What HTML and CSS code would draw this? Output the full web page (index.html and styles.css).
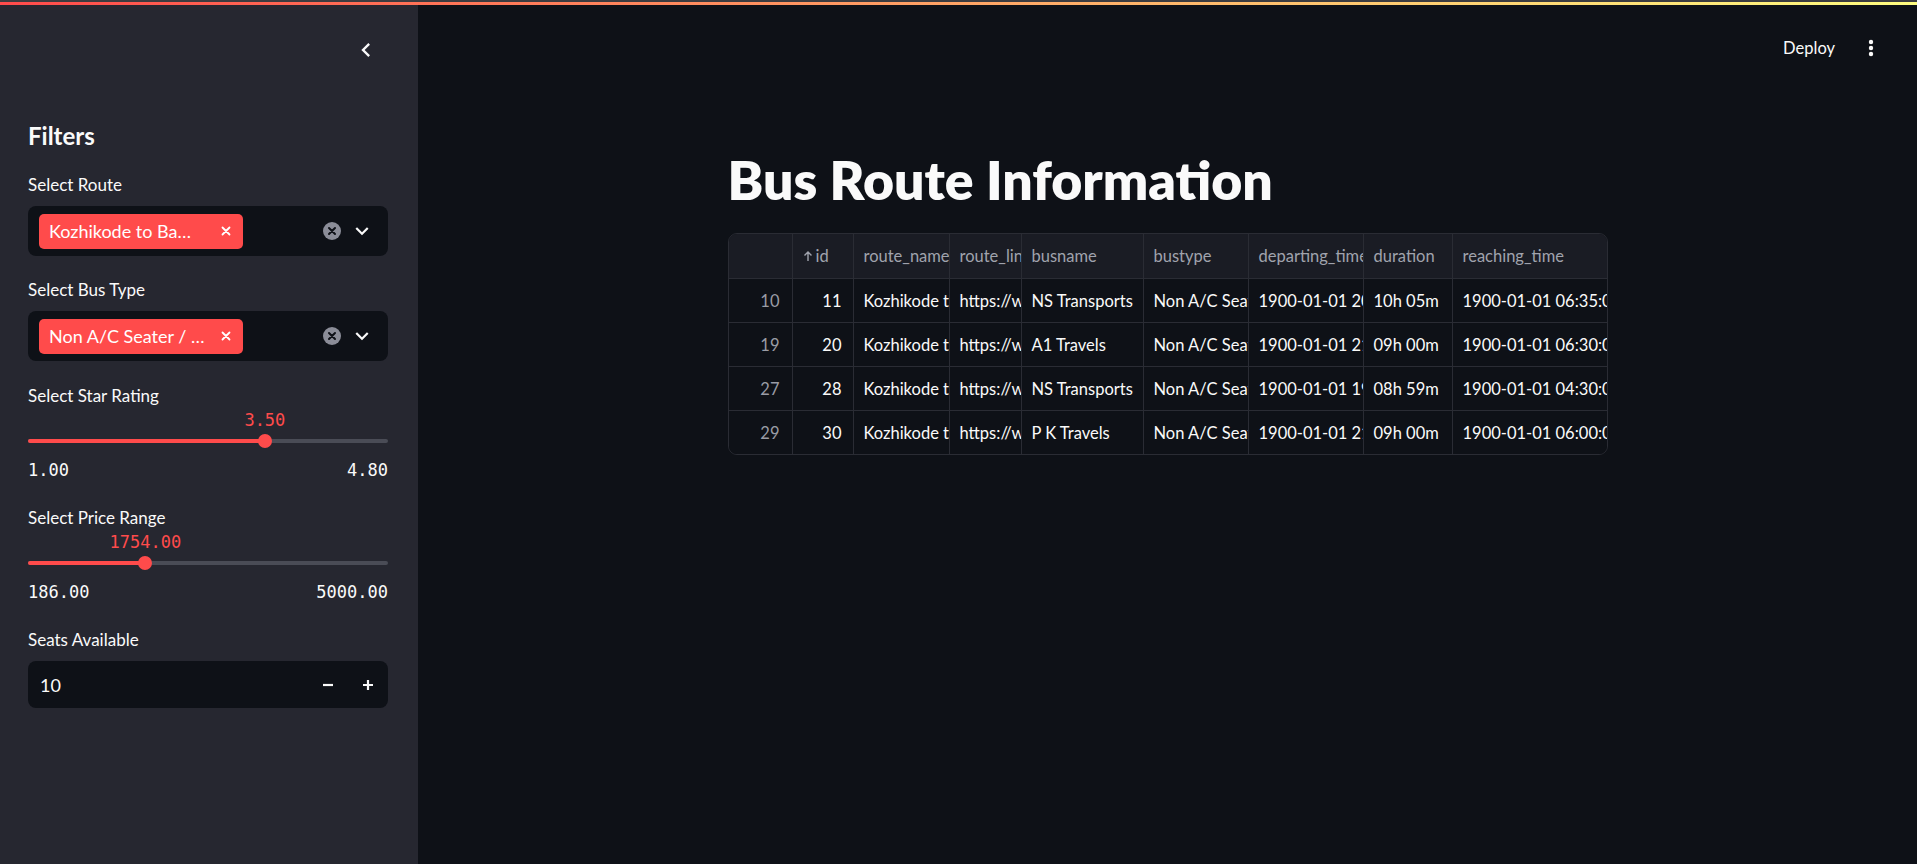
FILE: index.html
```html
<!DOCTYPE html>
<html lang="en">
<head>
<meta charset="utf-8">
<title>Bus Route Information</title>
<link rel="stylesheet" href="styles.css">
</head>
<body>
<div class="topbar"><div class="topbar-gray"></div><div class="topbar-grad"></div></div>
<div class="app">
  <aside class="sidebar">
    <div class="sb-header">
      <svg class="collapse" width="28" height="28" viewBox="0 0 24 24"><path d="M15.41 7.41L14 6l-6 6 6 6 1.41-1.41L10.83 12z" fill="#fafafa"/></svg>
    </div>
    <div class="sb-content">
      <h2 class="sb-title">Filters</h2>

      <div class="field f-route">
        <label class="field-label">Select Route</label>
        <div class="select">
          <span class="tag" title="Kozhikode to Bangalore"><span class="tag-text">Kozhikode to Ba…</span><svg class="tag-x" width="10" height="10" viewBox="0 0 10 10"><path d="M1.5 1.5l7 7M8.5 1.5l-7 7" stroke="#fff" stroke-width="1.8" stroke-linecap="round"/></svg></span>
          <span class="select-icons">
            <svg width="18" height="18" viewBox="0 0 18 18"><circle cx="9" cy="9" r="9" fill="#8b8d98"/><path d="M6 6l6 6M12 6l-6 6" stroke="#0e1117" stroke-width="2" stroke-linecap="round"/></svg>
            <svg width="26" height="26" viewBox="0 0 24 24"><path d="M16.59 8.59L12 13.17 7.41 8.59 6 10l6 6 6-6z" fill="#fafafa"/></svg>
          </span>
        </div>
      </div>

      <div class="field f-type">
        <label class="field-label">Select Bus Type</label>
        <div class="select">
          <span class="tag" title="Non A/C Seater / Sleeper (2+1)"><span class="tag-text">Non A/C Seater / …</span><svg class="tag-x" width="10" height="10" viewBox="0 0 10 10"><path d="M1.5 1.5l7 7M8.5 1.5l-7 7" stroke="#fff" stroke-width="1.8" stroke-linecap="round"/></svg></span>
          <span class="select-icons">
            <svg width="18" height="18" viewBox="0 0 18 18"><circle cx="9" cy="9" r="9" fill="#8b8d98"/><path d="M6 6l6 6M12 6l-6 6" stroke="#0e1117" stroke-width="2" stroke-linecap="round"/></svg>
            <svg width="26" height="26" viewBox="0 0 24 24"><path d="M16.59 8.59L12 13.17 7.41 8.59 6 10l6 6 6-6z" fill="#fafafa"/></svg>
          </span>
        </div>
      </div>

      <div class="field f-rating">
        <label class="field-label">Select Star Rating</label>
        <div class="slider-value"><span style="left:65.8%">3.50</span></div>
        <div class="slider-row">
          <div class="track"><div class="fill" style="width:65.8%"></div><div class="thumb" style="left:65.8%"></div></div>
        </div>
        <div class="ticks"><span>1.00</span><span>4.80</span></div>
      </div>

      <div class="field f-price">
        <label class="field-label">Select Price Range</label>
        <div class="slider-value"><span style="left:32.6%">1754.00</span></div>
        <div class="slider-row">
          <div class="track"><div class="fill" style="width:32.6%"></div><div class="thumb" style="left:32.6%"></div></div>
        </div>
        <div class="ticks"><span>186.00</span><span>5000.00</span></div>
      </div>

      <div class="field f-seats">
        <label class="field-label">Seats Available</label>
        <div class="numinput">
          <span class="num-value">10</span>
          <span class="step"><svg width="12" height="12" viewBox="0 0 12 12"><path d="M1 6h10" stroke="#fafafa" stroke-width="2.2"/></svg></span>
          <span class="step"><svg width="12" height="12" viewBox="0 0 12 12"><path d="M1 6h10M6 1v10" stroke="#fafafa" stroke-width="2.2"/></svg></span>
        </div>
      </div>
    </div>
  </aside>

  <main class="main">
    <header class="main-header">
      <span class="deploy">Deploy</span>
      <svg class="kebab" width="24" height="24" viewBox="0 0 24 24"><circle cx="12" cy="6" r="2.2" fill="#fafafa"/><circle cx="12" cy="12" r="2.2" fill="#fafafa"/><circle cx="12" cy="18" r="2.2" fill="#fafafa"/></svg>
    </header>
    <div class="content">
      <h1 class="title">Bus Route Information</h1>
      <div class="table-wrap">
        <div class="grid">
          <div class="cell head"></div>
          <div class="cell head"><svg class="sort" width="10" height="12" viewBox="0 0 10 12"><path d="M5 11V2M1.5 5.5L5 2l3.5 3.5" stroke="#a0a3ad" stroke-width="1.4" fill="none"/></svg><span>id</span></div>
          <div class="cell head">route_name</div>
          <div class="cell head">route_link</div>
          <div class="cell head">busname</div>
          <div class="cell head">bustype</div>
          <div class="cell head">departing_time</div>
          <div class="cell head">duration</div>
          <div class="cell head">reaching_time</div>

          <div class="cell idx">10</div>
          <div class="cell num">11</div>
          <div class="cell">Kozhikode to Bangalore</div>
          <div class="cell">https://www.redbus.in</div>
          <div class="cell">NS Transports</div>
          <div class="cell">Non A/C Seater / Sleeper (2+1)</div>
          <div class="cell">1900-01-01 20:30:00</div>
          <div class="cell">10h 05m</div>
          <div class="cell">1900-01-01 06:35:00</div>

          <div class="cell idx">19</div>
          <div class="cell num">20</div>
          <div class="cell">Kozhikode to Bangalore</div>
          <div class="cell">https://www.redbus.in</div>
          <div class="cell">A1 Travels</div>
          <div class="cell">Non A/C Seater / Sleeper (2+1)</div>
          <div class="cell">1900-01-01 21:30:00</div>
          <div class="cell">09h 00m</div>
          <div class="cell">1900-01-01 06:30:00</div>

          <div class="cell idx">27</div>
          <div class="cell num">28</div>
          <div class="cell">Kozhikode to Bangalore</div>
          <div class="cell">https://www.redbus.in</div>
          <div class="cell">NS Transports</div>
          <div class="cell">Non A/C Seater / Sleeper (2+1)</div>
          <div class="cell">1900-01-01 19:31:00</div>
          <div class="cell">08h 59m</div>
          <div class="cell">1900-01-01 04:30:00</div>

          <div class="cell idx last">29</div>
          <div class="cell num last">30</div>
          <div class="cell last">Kozhikode to Bangalore</div>
          <div class="cell last">https://www.redbus.in</div>
          <div class="cell last">P K Travels</div>
          <div class="cell last">Non A/C Seater / Sleeper (2+1)</div>
          <div class="cell last">1900-01-01 21:00:00</div>
          <div class="cell last">09h 00m</div>
          <div class="cell last">1900-01-01 06:00:00</div>
        </div>
      </div>
    </div>
  </main>
</div>
</body>
</html>
```

FILE: styles.css
```css
* { box-sizing: border-box; }

html, body {
  margin: 0;
  height: 864px;
  overflow: hidden;
}

body {
  background: #0e1117;
  color: #fafafa;
  font-family: Lato, "Noto Sans", sans-serif;
}

.topbar { height: 5px; display: flex; flex-direction: column; }
.topbar-gray { height: 2px; background: #3c3c40; }
.topbar-grad { height: 3px; background: linear-gradient(90deg, #ff4b4b, #fffd80); }

.app { display: flex; height: 859px; }

/* Sidebar */
.sidebar {
  width: 418px;
  flex: none;
  background: #262730;
}

.sb-header {
  height: 90px;
  display: flex;
  justify-content: flex-end;
  align-items: center;
  padding-right: 38px;
}

.sb-content {
  padding: 0 30px 0 28px;
  display: flex;
  flex-direction: column;
}

.sb-title {
  margin: 26px 0 0;
  font-size: 24px;
  line-height: 29px;
  font-weight: 700;
}

.field { display: flex; flex-direction: column; }
.f-route { margin-top: 24px; }
.f-type { margin-top: 23px; }
.f-rating { margin-top: 24px; }
.f-price { margin-top: 27px; }
.f-seats { margin-top: 27px; }

.field-label {
  display: block;
  font-size: 17px;
  line-height: 22px;
}

.select {
  margin-top: 10px;
  height: 50px;
  background: #0e1117;
  border-radius: 8px;
  display: flex;
  align-items: center;
  padding: 0 13px 0 11px;
}

.tag {
  height: 35px;
  background: #ff4b4b;
  border-radius: 5px;
  display: flex;
  align-items: center;
  padding: 0 12px 0 10px;
  gap: 19px;
  color: #fff;
  font-size: 18px;
}

.tag-text {
  width: 153px;
  white-space: nowrap;
}

.select-icons {
  margin-left: auto;
  display: flex;
  align-items: center;
  gap: 8px;
}

/* Slider */
.slider-value {
  position: relative;
  height: 20px;
  margin-top: 3px;
  font-family: "DejaVu Sans Mono", "Liberation Mono", monospace;
  font-size: 17px;
  line-height: 20px;
  color: #ff4b4b;
}

.slider-value span {
  position: absolute;
  top: 0;
  transform: translateX(-50%);
  white-space: nowrap;
}

.slider-row {
  height: 20px;
  margin-top: 1px;
  display: flex;
  align-items: center;
}

.track {
  position: relative;
  width: 100%;
  height: 4px;
  background: #4a4c56;
  border-radius: 2px;
}

.fill {
  position: absolute;
  left: 0;
  top: 0;
  bottom: 0;
  background: #ff4b4b;
  border-radius: 2px;
}

.thumb {
  position: absolute;
  top: 50%;
  width: 14px;
  height: 14px;
  border-radius: 50%;
  background: #ff4b4b;
  transform: translate(-50%, -50%);
}

.ticks {
  display: flex;
  justify-content: space-between;
  margin-top: 9px;
  font-family: "DejaVu Sans Mono", "Liberation Mono", monospace;
  font-size: 17px;
  line-height: 20px;
}

/* Number input */
.numinput {
  margin-top: 10px;
  height: 47px;
  background: #0e1117;
  border-radius: 8px;
  display: flex;
  align-items: center;
  padding-left: 12px;
}

.num-value {
  flex: 1;
  font-size: 18px;
}

.step {
  width: 40px;
  height: 47px;
  display: flex;
  align-items: center;
  justify-content: center;
}

/* Main */
.main {
  flex: 1;
  min-width: 0;
  display: flex;
  flex-direction: column;
}

.main-header {
  height: 86px;
  display: flex;
  justify-content: flex-end;
  align-items: center;
  gap: 24px;
  padding-right: 34px;
}

.deploy { font-size: 16.5px; }

.content {
  width: 880px;
  margin: 55px auto 0;
}

.title {
  margin: 0;
  font-size: 53.5px;
  line-height: 66px;
  font-weight: 800;
}

.table-wrap {
  margin-top: 21px;
  border: 1px solid #2a2c34;
  border-radius: 9px;
  overflow: hidden;
}

.grid {
  display: grid;
  grid-template-columns: 64px 61px 96px 72px 122px 105px 115px 89px 200px;
  width: max-content;
}

.cell {
  height: 44px;
  padding: 0 10px;
  display: flex;
  align-items: center;
  white-space: nowrap;
  overflow: hidden;
  border-right: 1px solid #2a2c34;
  border-bottom: 1px solid #2a2c34;
  font-size: 16.5px;
  background: #0e1117;
  color: #fafafa;
}

.cell.head {
  height: 45px;
  background: #1a1c24;
  color: #a0a3ad;
}

.cell.last { border-bottom: none; height: 43px; }

.cell.idx {
  justify-content: flex-end;
  padding-right: 12px;
  color: #9a9ca5;
}

.cell.num {
  justify-content: flex-end;
  padding-right: 11px;
}

.sort { margin-right: 3px; }
```
